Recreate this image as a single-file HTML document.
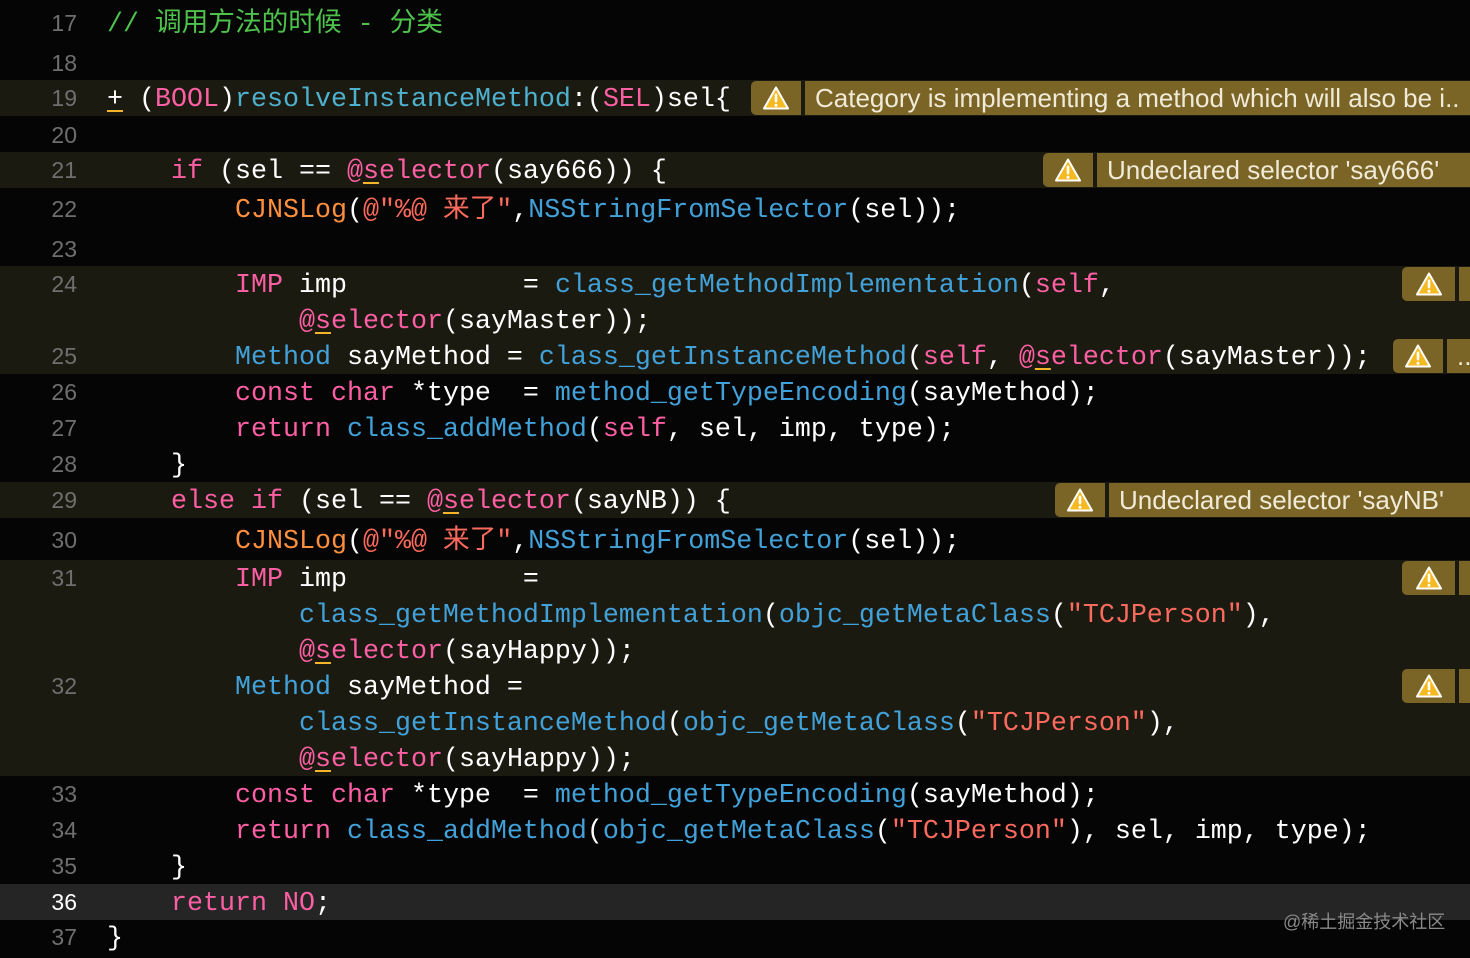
<!DOCTYPE html>
<html><head><meta charset="utf-8"><style>
body{margin:0;width:1470px;height:958px;background:#050505;overflow:hidden;position:relative;font-family:"Liberation Mono","Noto Sans CJK SC",monospace;}
.band{position:absolute;left:0;width:1470px;background:#1b1a10}
.ln{position:absolute;left:0;width:77px;text-align:right;font-family:"Liberation Sans",sans-serif;font-size:23px;color:#6f6f6f;line-height:36px}
.c{position:absolute;left:107px;font-size:26.67px;line-height:36px;color:#fff;white-space:pre;margin-top:2px}
.k{color:#fc5fa3}.f{color:#41a1d8}.t{color:#4eb0cc}.s{color:#fc6a5d}.o{color:#fd8f3f}.g{color:#4ec34c}
.u{text-decoration:underline;text-decoration-color:#f5b52a;text-underline-offset:4px}
.bi{position:absolute;height:34px;background:#7b6526;border-radius:5px 0 0 5px}
.bt{position:absolute;height:34px;background:#7b6526;color:#f0ead8;font-family:"Liberation Sans",sans-serif;font-size:26px;line-height:35px;padding-left:10px;white-space:nowrap;overflow:hidden}
.bi svg{position:absolute;left:50%;top:50%;transform:translate(-50%,-50%)}
</style></head><body>
<div class="band" style="top:80px;height:36px"></div>
<div class="band" style="top:152px;height:36px"></div>
<div class="band" style="top:266px;height:108px"></div>
<div class="band" style="top:482px;height:36px"></div>
<div class="band" style="top:560px;height:216px"></div>
<div class="band" style="top:884px;height:36px;background:#252525"></div>

<div class="ln" style="top:5px">17</div>
<div class="ln" style="top:45px">18</div>
<div class="ln" style="top:80px">19</div>
<div class="ln" style="top:117px">20</div>
<div class="ln" style="top:152px">21</div>
<div class="ln" style="top:191px">22</div>
<div class="ln" style="top:231px">23</div>
<div class="ln" style="top:266px">24</div>
<div class="ln" style="top:338px">25</div>
<div class="ln" style="top:374px">26</div>
<div class="ln" style="top:410px">27</div>
<div class="ln" style="top:446px">28</div>
<div class="ln" style="top:482px">29</div>
<div class="ln" style="top:522px">30</div>
<div class="ln" style="top:560px">31</div>
<div class="ln" style="top:668px">32</div>
<div class="ln" style="top:776px">33</div>
<div class="ln" style="top:812px">34</div>
<div class="ln" style="top:848px">35</div>
<div class="ln" style="top:884px;color:#fff">36</div>
<div class="ln" style="top:919px">37</div>

<div class="c g" style="top:5px">// 调用方法的时候 - 分类</div>
<div class="c" style="top:80px"><span class="u">+</span> (<span class="k">BOOL</span>)<span class="t">resolveInstanceMethod</span>:(<span class="k">SEL</span>)sel{</div>
<div class="c" style="top:152px">    <span class="k">if</span> (sel == <span class="k">@<span class="u">s</span>elector</span>(say666)) {</div>
<div class="c" style="top:191px">        <span class="o">CJNSLog</span>(<span class="s">@"%@ 来了"</span>,<span class="f">NSStringFromSelector</span>(sel));</div>
<div class="c" style="top:266px">        <span class="k">IMP</span> imp           = <span class="f">class_getMethodImplementation</span>(<span class="k">self</span>,</div>
<div class="c" style="top:302px">            <span class="k">@<span class="u">s</span>elector</span>(sayMaster));</div>
<div class="c" style="top:338px">        <span class="f">Method</span> sayMethod = <span class="f">class_getInstanceMethod</span>(<span class="k">self</span>, <span class="k">@<span class="u">s</span>elector</span>(sayMaster));</div>
<div class="c" style="top:374px">        <span class="k">const char</span> *type  = <span class="f">method_getTypeEncoding</span>(sayMethod);</div>
<div class="c" style="top:410px">        <span class="k">return</span> <span class="f">class_addMethod</span>(<span class="k">self</span>, sel, imp, type);</div>
<div class="c" style="top:446px">    }</div>
<div class="c" style="top:482px">    <span class="k">else if</span> (sel == <span class="k">@<span class="u">s</span>elector</span>(sayNB)) {</div>
<div class="c" style="top:522px">        <span class="o">CJNSLog</span>(<span class="s">@"%@ 来了"</span>,<span class="f">NSStringFromSelector</span>(sel));</div>
<div class="c" style="top:560px">        <span class="k">IMP</span> imp           =</div>
<div class="c" style="top:596px">            <span class="f">class_getMethodImplementation</span>(<span class="f">objc_getMetaClass</span>(<span class="s">"TCJPerson"</span>),</div>
<div class="c" style="top:632px">            <span class="k">@<span class="u">s</span>elector</span>(sayHappy));</div>
<div class="c" style="top:668px">        <span class="f">Method</span> sayMethod =</div>
<div class="c" style="top:704px">            <span class="f">class_getInstanceMethod</span>(<span class="f">objc_getMetaClass</span>(<span class="s">"TCJPerson"</span>),</div>
<div class="c" style="top:740px">            <span class="k">@<span class="u">s</span>elector</span>(sayHappy));</div>
<div class="c" style="top:776px">        <span class="k">const char</span> *type  = <span class="f">method_getTypeEncoding</span>(sayMethod);</div>
<div class="c" style="top:812px">        <span class="k">return</span> <span class="f">class_addMethod</span>(<span class="f">objc_getMetaClass</span>(<span class="s">"TCJPerson"</span>), sel, imp, type);</div>
<div class="c" style="top:848px">    }</div>
<div class="c" style="top:884px">    <span class="k">return NO</span>;</div>
<div class="c" style="top:919px">}</div>

<svg width="0" height="0" style="position:absolute"><defs><g id="w"><path d="M13 2 L25 23 L1 23 Z" fill="#f5b922" stroke="#fff" stroke-width="2" stroke-linejoin="round"/><rect x="11.7" y="8" width="2.6" height="9" rx="1.2" fill="#fff"/><circle cx="13" cy="19.8" r="1.5" fill="#fff"/></g></defs></svg>

<div class="bi" style="left:751px;top:81px;width:50px"><svg width="26" height="25"><use href="#w"/></svg></div>
<div class="bt" style="left:805px;top:81px;width:655px">Category is implementing a method which will also be i..</div>
<div class="bi" style="left:1043px;top:153px;width:50px"><svg width="26" height="25"><use href="#w"/></svg></div>
<div class="bt" style="left:1097px;top:153px;width:363px">Undeclared selector 'say666'</div>
<div class="bi" style="left:1402px;top:267px;width:53px"><svg width="26" height="25"><use href="#w"/></svg></div>
<div class="bt" style="left:1459px;top:267px;width:1px"></div>
<div class="bi" style="left:1393px;top:339px;width:50px"><svg width="26" height="25"><use href="#w"/></svg></div>
<div class="bt" style="left:1447px;top:339px;width:13px">..</div>
<div class="bi" style="left:1055px;top:483px;width:50px"><svg width="26" height="25"><use href="#w"/></svg></div>
<div class="bt" style="left:1109px;top:483px;width:351px">Undeclared selector 'sayNB'</div>
<div class="bi" style="left:1402px;top:561px;width:53px"><svg width="26" height="25"><use href="#w"/></svg></div>
<div class="bt" style="left:1459px;top:561px;width:1px"></div>
<div class="bi" style="left:1402px;top:669px;width:53px"><svg width="26" height="25"><use href="#w"/></svg></div>
<div class="bt" style="left:1459px;top:669px;width:1px"></div>

<div style="position:absolute;left:1283px;top:908px;font-family:'Liberation Sans','Noto Sans CJK SC',sans-serif;font-size:18px;color:#8a8a8a">@稀土掘金技术社区</div>
</body></html>
